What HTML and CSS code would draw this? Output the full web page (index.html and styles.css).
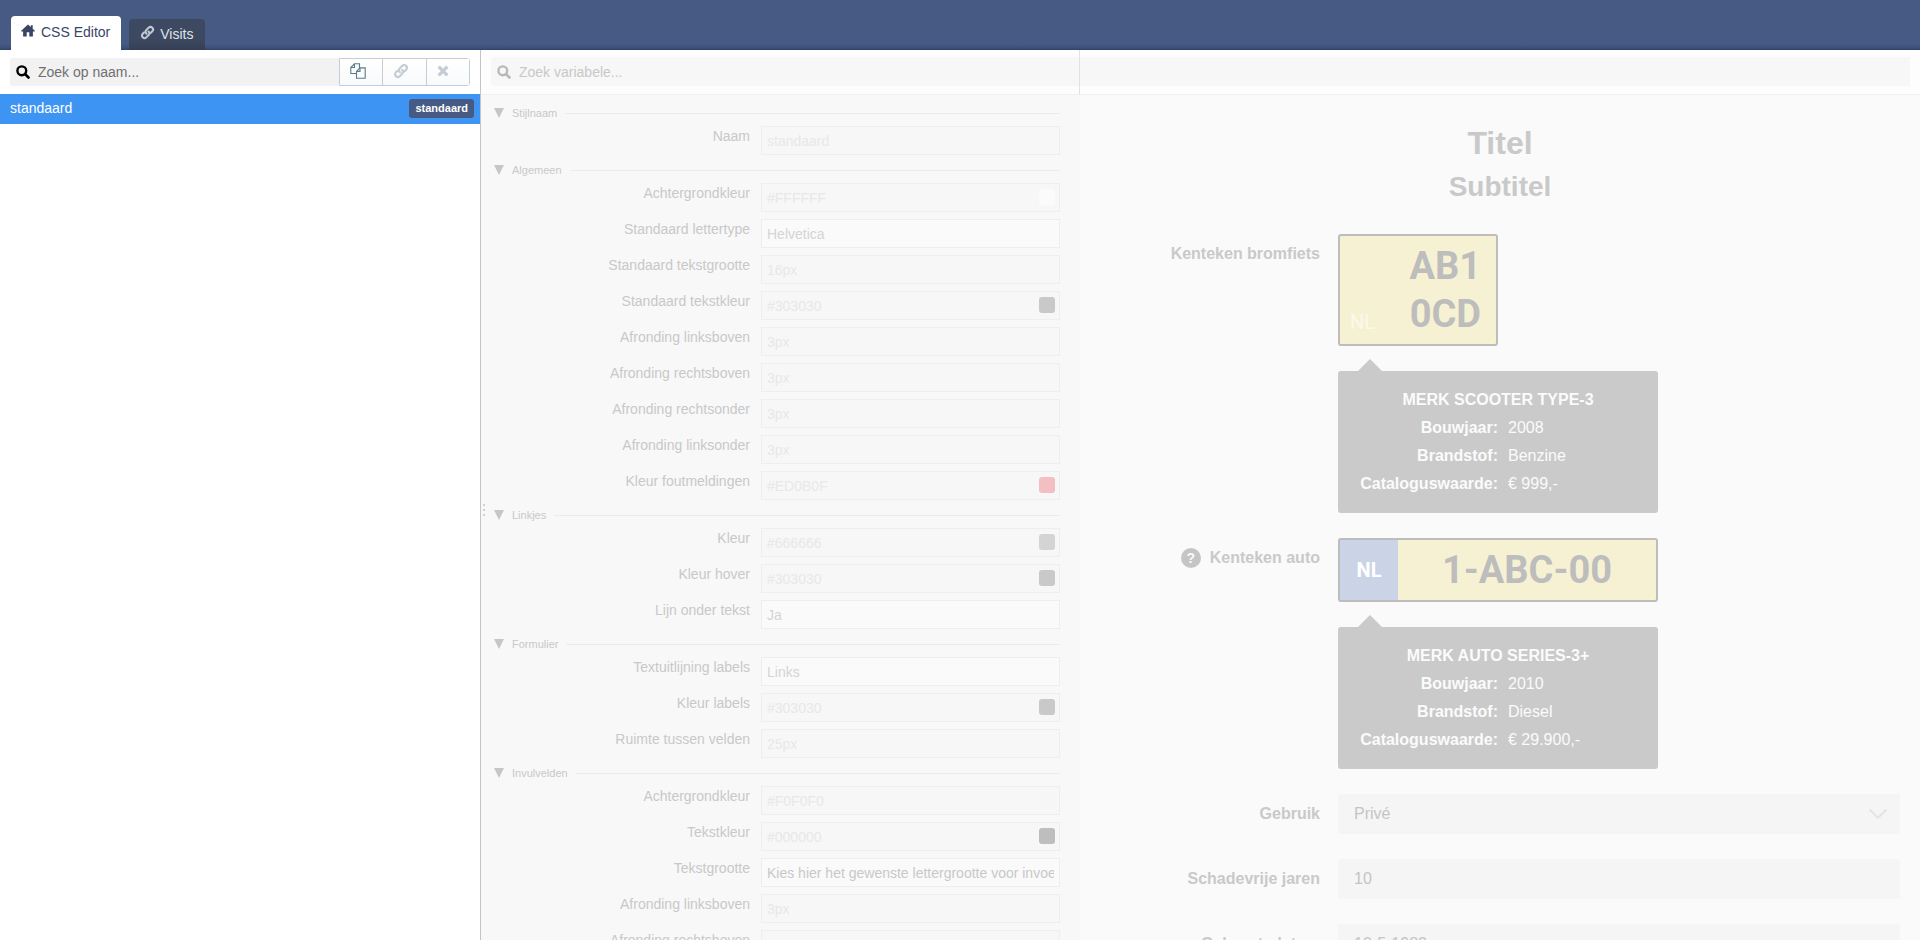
FILE: index.html
```html
<!DOCTYPE html>
<html lang="nl">
<head>
<meta charset="utf-8">
<title>CSS Editor</title>
<link rel="stylesheet" href="styles.css">
</head>
<body>
<svg class="defs" aria-hidden="true">
  <symbol id="i-search" viewBox="0 0 14 14"><circle cx="5.8" cy="5.8" r="4.400" fill="none" stroke="currentColor" stroke-width="2.400"/><path d="M9 9l3.500 3.500" stroke="currentColor" stroke-width="2.600" stroke-linecap="round"/></symbol>
  <symbol id="i-link" viewBox="0 0 16 16"><g fill="none" stroke="currentColor" stroke-width="2.200" stroke-linecap="round" stroke-linejoin="round"><path d="M6.9 9.200C5.400 7.800 5.800 6.300 6.800 5.300L9.300 2.800C10.400 1.700 12 1.800 13.100 2.900C14.200 4 14.200 5.600 13.100 6.700L11.600 8.200"/><path d="M9.100 6.900C10.600 8.200 10.200 9.700 9.200 10.700L6.700 13.200C5.600 14.300 4 14.200 2.900 13.100C1.800 12 1.800 10.400 2.900 9.300L4.300 7.900"/></g></symbol>
  <symbol id="i-home" viewBox="0 0 14 13"><path d="M7 .4L.2 6.800v.8h1.900v4.900h3.600V8.300h2.600v4.200h3.600V7.600h1.900v-.8L11.700 4.800V1.200H9.900v1.900z" fill="currentColor"/></symbol>
  <symbol id="i-copy" viewBox="0 0 16 16"><g fill="none" stroke="currentColor" stroke-width="1.100"><path d="M6.500 10.500H.8V4.500L4.500.8h5v4.100"/><path d="M.8 4.500h3.700V.8"/><path d="M10 4.900h5.200v10.300H6.500V8.400z"/><path d="M6.500 8.400H10V4.900"/></g></symbol>
  <symbol id="i-close" viewBox="0 0 10 10"><path d="M1.400 1.400l7.200 7.200M8.600 1.400L1.400 8.600" stroke="currentColor" stroke-width="2.800"/></symbol>
</svg>

<header class="topbar">
  <nav class="tabs">
    <a class="tab tab-active" href="#editor"><svg class="icon-home"><use href="#i-home"/></svg>CSS Editor</a>
    <a class="tab" href="#visits"><svg class="icon-tab"><use href="#i-link"/></svg>Visits</a>
  </nav>
</header>

<main class="panes">
  <section class="pane list-pane">
    <div class="toolbar">
      <label class="search"><svg class="icon-search"><use href="#i-search"/></svg><input type="text" placeholder="Zoek op naam..." aria-label="Zoek op naam"></label>
      <div class="button-group">
        <button type="button" aria-label="Kopiëren"><svg class="icon-copy"><use href="#i-copy"/></svg></button>
        <button type="button" aria-label="Koppelen" disabled><svg class="icon-link"><use href="#i-link"/></svg></button>
        <button type="button" aria-label="Verwijderen" disabled><svg class="icon-close"><use href="#i-close"/></svg></button>
      </div>
    </div>
    <a class="list-row" href="#standaard"><span>standaard</span><span class="badge">standaard</span></a>
  </section>

  <section class="pane form-pane">
    <span class="grip"></span>
    <div class="toolbar">
      <label class="search"><svg class="icon-search"><use href="#i-search"/></svg><input type="text" placeholder="Zoek variabele..." aria-label="Zoek variabele"></label>
    </div>
    <form class="variables">
      <h2 class="legend">Stijlnaam</h2>
      <div class="row"><label for="v1">Naam</label><input id="v1" type="text" placeholder="standaard"></div>

      <h2 class="legend">Algemeen</h2>
      <div class="row"><label for="v2">Achtergrondkleur</label><div class="colour"><input id="v2" type="text" placeholder="#FFFFFF"><span class="swatch white"></span></div></div>
      <div class="row"><label for="v3">Standaard lettertype</label><select id="v3"><option>Helvetica</option></select></div>
      <div class="row"><label for="v4">Standaard tekstgrootte</label><input id="v4" type="text" placeholder="16px"></div>
      <div class="row"><label for="v5">Standaard tekstkleur</label><div class="colour"><input id="v5" type="text" placeholder="#303030"><span class="swatch dark"></span></div></div>
      <div class="row"><label for="v6">Afronding linksboven</label><input id="v6" type="text" placeholder="3px"></div>
      <div class="row"><label for="v7">Afronding rechtsboven</label><input id="v7" type="text" placeholder="3px"></div>
      <div class="row"><label for="v8">Afronding rechtsonder</label><input id="v8" type="text" placeholder="3px"></div>
      <div class="row"><label for="v9">Afronding linksonder</label><input id="v9" type="text" placeholder="3px"></div>
      <div class="row"><label for="v10">Kleur foutmeldingen</label><div class="colour"><input id="v10" type="text" placeholder="#ED0B0F"><span class="swatch red"></span></div></div>

      <h2 class="legend">Linkjes</h2>
      <div class="row"><label for="v11">Kleur</label><div class="colour"><input id="v11" type="text" placeholder="#666666"><span class="swatch grey"></span></div></div>
      <div class="row"><label for="v12">Kleur hover</label><div class="colour"><input id="v12" type="text" placeholder="#303030"><span class="swatch dark"></span></div></div>
      <div class="row"><label for="v13">Lijn onder tekst</label><select id="v13"><option>Ja</option></select></div>

      <h2 class="legend">Formulier</h2>
      <div class="row"><label for="v14">Textuitlijning labels</label><select id="v14"><option>Links</option></select></div>
      <div class="row"><label for="v15">Kleur labels</label><div class="colour"><input id="v15" type="text" placeholder="#303030"><span class="swatch dark"></span></div></div>
      <div class="row"><label for="v16">Ruimte tussen velden</label><input id="v16" type="text" placeholder="25px"></div>

      <h2 class="legend">Invulvelden</h2>
      <div class="row"><label for="v17">Achtergrondkleur</label><div class="colour"><input id="v17" type="text" placeholder="#F0F0F0"><span class="swatch light"></span></div></div>
      <div class="row"><label for="v18">Tekstkleur</label><div class="colour"><input id="v18" type="text" placeholder="#000000"><span class="swatch black"></span></div></div>
      <div class="row"><label for="v19">Tekstgrootte</label><select id="v19" class="strong"><option>Kies hier het gewenste lettergrootte voor invoervelden</option></select></div>
      <div class="row"><label for="v20">Afronding linksboven</label><input id="v20" type="text" placeholder="3px"></div>
      <div class="row"><label for="v21">Afronding rechtsboven</label><input id="v21" type="text" placeholder="3px"></div>
    </form>
  </section>

  <section class="pane preview-pane">
    <div class="toolbar"><div class="search"></div></div>
    <form class="preview">
      <h1>Titel</h1>
      <h2 class="subtitle">Subtitel</h2>
      <div class="field">
        <span class="field-label">Kenteken bromfiets</span>
        <div class="plate plate-moped"><span class="country">NL</span><span class="number">AB1<br>0CD</span></div>
      </div>
      <div class="field">
        <div class="info">
          <strong>MERK SCOOTER TYPE-3</strong>
          <dl><dt>Bouwjaar:</dt><dd>2008</dd><dt>Brandstof:</dt><dd>Benzine</dd><dt>Cataloguswaarde:</dt><dd>€ 999,-</dd></dl>
        </div>
      </div>
      <div class="field">
        <label class="field-label" for="p2"><span class="help">?</span>Kenteken auto</label>
        <div class="plate plate-car"><span class="country">NL</span><input class="number" id="p2" type="text" value="1-ABC-00"></div>
      </div>
      <div class="field">
        <div class="info">
          <strong>MERK AUTO SERIES-3+</strong>
          <dl><dt>Bouwjaar:</dt><dd>2010</dd><dt>Brandstof:</dt><dd>Diesel</dd><dt>Cataloguswaarde:</dt><dd>€ 29.900,-</dd></dl>
        </div>
      </div>
      <div class="field">
        <label class="field-label" for="p3">Gebruik</label>
        <div class="select-wrap"><select class="control" id="p3"><option>Privé</option></select><svg class="chevron" viewBox="0 0 20 12"><path d="M1.500 1.500L10 9.800l8.500-8.300" fill="none" stroke="currentColor" stroke-width="2"/></svg></div>
      </div>
      <div class="field"><label class="field-label" for="p4">Schadevrije jaren</label><input class="control" id="p4" type="text" value="10"></div>
      <div class="field"><label class="field-label" for="p5">Geboortedatum</label><input class="control" id="p5" type="text" value="10-5-1982"></div>
    </form>
  </section>
</main>
</body>
</html>
```

FILE: styles.css
```css
* { box-sizing: border-box; }

html, body { height: 100%; }

body {
  margin: 0;
  display: flex;
  flex-direction: column;
  overflow: hidden;
  background: #fff;
  color: #303030;
  font: 14px/18px "Liberation Sans", Arial, sans-serif;
}

input, select, button { font: inherit; color: inherit; margin: 0; min-width: 0; }
input::placeholder { color: inherit; opacity: 1; }
select { appearance: none; }
.defs { position: absolute; width: 0; height: 0; }

/* Top bar */
.topbar {
  flex: none;
  height: 50px;
  padding-left: 11px;
  background: linear-gradient(#465a84 44px, #3c4f7a 48px, #2f406c);
}
.tabs { display: flex; align-items: flex-end; gap: 8px; height: 50px; }
.tab {
  display: flex;
  align-items: center;
  gap: 5px;
  height: 31px;
  padding: 0 12px 2px 11px;
  border-radius: 4px 4px 0 0;
  background: linear-gradient(#3d4961 20px, #353f55);
  color: #dfe3ea;
  text-decoration: none;
}
.tab-active { gap: 6px; height: 34px; padding: 0 11px 2px 10px; background: #fff; color: #3a4566; }
.icon-home { width: 14px; height: 13px; margin-bottom: 3px; }
.icon-tab { width: 15px; height: 15px; margin-bottom: 2px; color: #c3c9d4; }

/* Panes */
.panes { flex: 1; min-height: 0; display: grid; grid-template-columns: 4fr 5fr 7fr; }
.pane { min-width: 0; min-height: 0; overflow: hidden; position: relative; }
.toolbar { display: flex; height: 44px; padding: 8px 10px; background: #fff; }
.search { flex: 1; min-width: 0; display: flex; align-items: center; padding-left: 6px; gap: 8px; background: #f2f2f2; border-radius: 3px 0 0 3px; }
.search input { flex: 1; border: 0; padding: 0; background: none; color: #707070; }
.icon-search { flex: none; width: 14px; height: 14px; color: #000; }

.button-group { display: flex; width: 131px; border: 1px solid #c3ced6; border-radius: 0 3px 3px 0; }
.button-group button { flex: 1; display: flex; align-items: center; padding: 0 0 2px 10px; border: 0; background: linear-gradient(#fff, #f8fafb); color: #5c7b8c; }
.button-group button + button { border-left: 1px solid #c3ced6; }
.button-group button:disabled { color: #c5cdd3; }
.icon-copy { width: 16px; height: 16px; }
.icon-link { width: 16px; height: 16px; }
.icon-close { width: 12px; height: 12px; }

.list-row {
  display: flex;
  align-items: center;
  justify-content: space-between;
  height: 30px;
  padding: 0 6px 2px 10px;
  background: #3d94f3;
  color: #fff;
  text-decoration: none;
}
.badge { height: 19px; padding: 0 6px; border-radius: 3px; background: #465a84; font-size: 11px; font-weight: bold; line-height: 18px; }

/* Variables */
.form-pane { border-left: 1px solid #c4c4c4; background: #f8f8f8; color: #c8c8c8; }
.form-pane .toolbar, .preview-pane .toolbar { height: 45px; padding: 7px 0 8px; border-bottom: 1px solid #f1f1f1; background: #fdfdfd; }
.form-pane .toolbar { padding-left: 10px; border-right: 1px solid #e2e2e2; }
.form-pane .search, .preview-pane .search { background: #f7f7f7; }
.form-pane .search input { color: #c8c8c8; }
.form-pane .icon-search { color: #b9b9b9; }
.grip { position: absolute; left: 2px; top: 454px; width: 2px; height: 12px; background: repeating-linear-gradient(#d0d0d0 0 2px, transparent 2px 5px); }

.variables { padding: 10px 20px 0 13px; }
.legend {
  display: flex;
  align-items: center;
  gap: 8px;
  height: 16px;
  margin: 0 0 5px;
  font-size: 11px;
  font-weight: normal;
  line-height: 16px;
}
.legend::before { content: ""; border: 5px solid transparent; border-top: 10px solid #c6c6c6; border-bottom: 0; }
.legend::after { content: ""; flex: 1; height: 1px; margin-top: 1px; background: #ececec; }
.row { display: grid; grid-template-columns: 256px 1fr; gap: 11px; height: 36px; }
.row > label { text-align: right; padding-top: 1px; }
.row input, .row select {
  display: block;
  width: 100%;
  height: 29px;
  padding: 0 5px;
  border: 1px solid #eee;
  border-radius: 0;
  background: #f7f7f7;
  color: #e8e8e8;
}
.row select { background: #fafafa; color: #d4d4d4; }
.row .strong { color: #c8c8c8; }
.colour { position: relative; }
.swatch { position: absolute; right: 5px; top: 6px; width: 16px; height: 16px; border-radius: 3px; }
.white { background: #fbfbfb; }
.light { background: #f6f6f6; }
.dark { background: #c9c9c9; }
.grey { background: #d4d4d4; }
.black { background: #bebebe; }
.red { background: #f4bfc3; }

/* Preview */
.preview-pane { background: #fafafa; color: #c9c9c9; font-size: 16px; }
.preview-pane .toolbar { padding-right: 10px; }
.preview { padding: 27px 20px 0; }
.preview h1 { margin: 0; font-size: 32px; line-height: 42px; text-align: center; }
.subtitle { margin: 0 0 25px; font-size: 28px; line-height: 45px; text-align: center; }
.field { display: grid; grid-template-columns: 220px 1fr; gap: 18px; margin-bottom: 25px; }
.field > * { grid-column: 2; }
.field > .field-label { grid-column: 1; display: flex; align-items: center; justify-content: flex-end; gap: 9px; height: 40px; font-weight: bold; }
.help { width: 20px; height: 20px; border-radius: 10px; background: #c5c5c5; color: #fafafa; font-size: 14px; line-height: 20px; text-align: center; }

.plate { display: flex; border: 2px solid #bdbdbd; border-radius: 3px; background: #f7f1d3; }
.number { color: #bdbdbd; font-family: Roboto, sans-serif; font-size: 38px; font-weight: bold; line-height: 48px; }
.country { color: #fff; font-family: Roboto, sans-serif; font-weight: bold; font-size: 20px; line-height: 20px; }
.plate-moped { width: 160px; height: 112px; padding: 6px 15px 6px 10px; justify-content: space-between; text-align: right; }
.plate-moped .country { align-self: flex-end; padding-bottom: 6px; color: #fbf8e8; font-weight: normal; }
.plate-car { width: 320px; height: 64px; }
.plate-car .country { width: 58px; background: #cbd4e7; line-height: 60px; text-align: center; }
.plate-car .number { flex: 1; border: 0; padding: 0; background: none; text-align: center; }

.info { position: relative; width: 320px; padding: 15px 20px; border-radius: 3px; background: #cacaca; color: #fbfbfb; line-height: 28px; text-align: center; }
.info::before { content: ""; position: absolute; left: 20px; top: -12px; border: 12px solid transparent; border-top: 0; border-bottom-color: #cacaca; }
.info dl { display: grid; grid-template-columns: 140px 1fr; column-gap: 10px; margin: 0; }
.info dt { font-weight: bold; text-align: right; }
.info dd { margin: 0; text-align: left; }

.control { width: 100%; height: 40px; padding: 0 16px; border: 0; border-radius: 3px; background: #f5f5f5; color: #c4c4c4; }
.select-wrap { position: relative; }
.chevron { position: absolute; right: 12px; top: 14px; width: 20px; height: 12px; color: #e4e4e4; }
```
